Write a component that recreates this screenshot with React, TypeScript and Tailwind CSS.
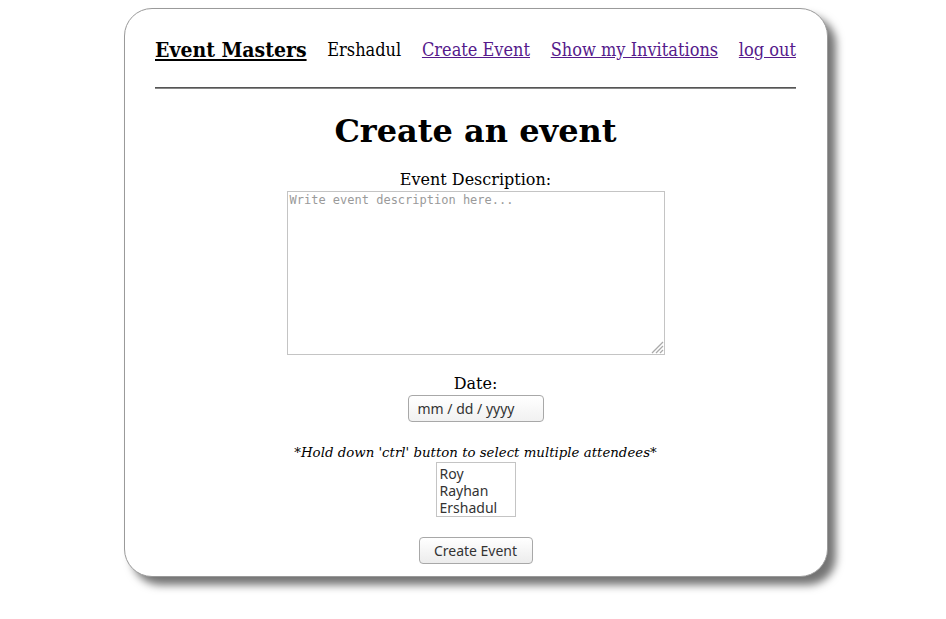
import React from "react";

const serif = "font-['DejaVu_Serif','Liberation_Serif',serif]";
const condensed = "font-['DejaVu_Serif_Condensed','DejaVu_Serif',serif]";
const ui = "font-['Noto_Sans','DejaVu_Sans',sans-serif]";

const navLinks = ["Create Event", "Show my Invitations", "log out"];
const attendees = ["Roy", "Rayhan", "Ershadul"];

export default function App() {
  return (
    <div className={`min-h-[619px] w-full bg-white pt-[8px] pl-[124px] ${serif}`}>
      <div className="h-[569px] w-[704px] rounded-[28px] border border-[#9a9a9a] bg-white pr-[31px] pl-[30px] shadow-[8px_8px_9px_rgba(0,0,0,0.55)]">
        {/* nav */}
        <nav className={`flex items-center justify-between pt-[29px] text-[18px] leading-[24px] text-black ${condensed}`}>
          <a href="#" className="text-[21px] font-bold underline">
            Event Masters
          </a>
          <span>Ershadul</span>
          {navLinks.map((l) => (
            <a key={l} href="#" className="text-[#551a8b] underline">
              {l}
            </a>
          ))}
        </nav>
        <div className="mt-[25px] h-[2px] border-t border-t-[#555] border-b border-b-[#888]" />

        <div className="flex flex-col items-center">
          <h1 className="mt-[22px] text-[32px] font-bold leading-[40px]">Create an event</h1>

          <label className="mt-[19px] text-[16px] leading-[20px]">Event Description:</label>
          <div className="relative mt-[1px]">
            <textarea
              placeholder="Write event description here..."
              className="block h-[164px] w-[378px] resize-none border border-[#c4c4c4] px-[2px] py-[1px] font-['DejaVu_Sans_Mono',monospace] text-[12px] leading-[15px] outline-none placeholder:text-[#9a9a9a]"
            />
            <svg className="absolute right-[1px] bottom-[1px]" width="14" height="14" viewBox="0 0 14 14">
              <path d="M13 2 L2 13 M13 6 L6 13 M13 10 L10 13" stroke="#aaa" strokeWidth="1.3" />
            </svg>
          </div>

          <label className="mt-[19px] text-[16px] leading-[20px]">Date:</label>
          <div
            className={`mt-[1px] flex h-[27px] w-[136px] items-center rounded-[4px] border border-[#a8a8a8] bg-gradient-to-b from-white to-[#f1f1f1] pl-[9px] text-[14px] text-[#333] ${ui}`}
          >
            mm / dd / yyyy
          </div>

          <p className="mt-[22px] text-[13.33px] leading-[18px] italic">
            *Hold down 'ctrl' button to select multiple attendees*
          </p>
          <div className={`flex h-[55px] w-[80px] flex-col border border-[#c4c4c4] pt-[2px] pl-[3px] text-[14px] leading-[17px] text-[#333] ${ui}`}>
            {attendees.map((a) => (
              <span key={a}>{a}</span>
            ))}
          </div>

          <button
            className={`mt-[20px] h-[27px] w-[114px] rounded-[4px] border border-[#a8a8a8] bg-gradient-to-b from-white to-[#ececec] text-[14px] text-[#333] ${ui}`}
          >
            Create Event
          </button>
        </div>
      </div>
    </div>
  );
}
